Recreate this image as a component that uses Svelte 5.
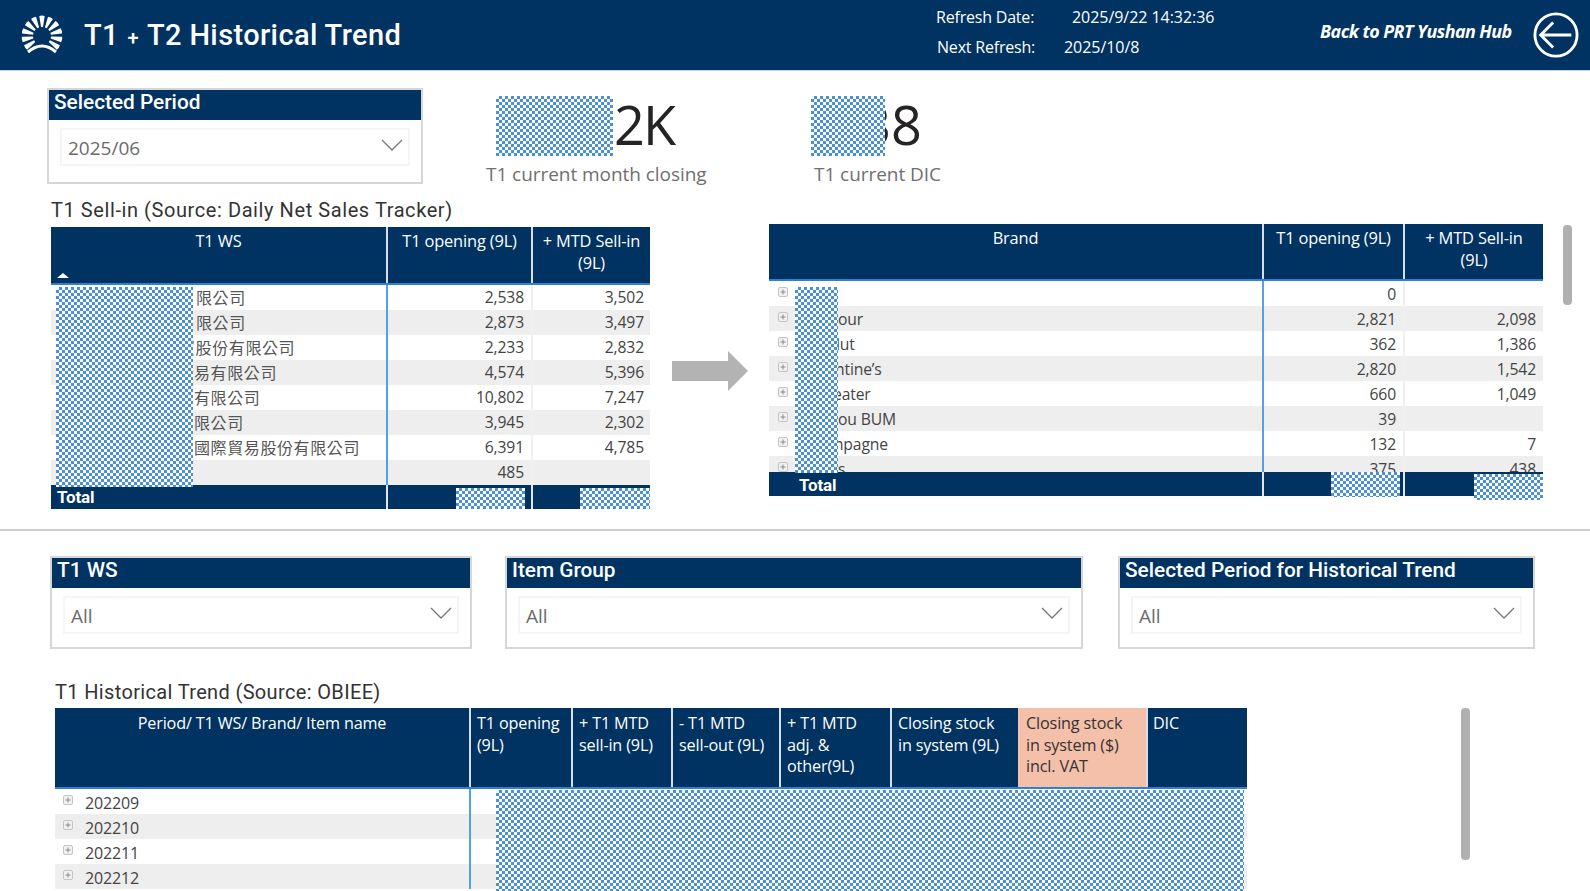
<script>
  const t1 = [
    ['限公司', 145, '2,538', '3,502'],
    ['限公司', 145, '2,873', '3,497'],
    ['貿股份有限公司', 128, '2,233', '2,832'],
    ['易有限公司', 143, '4,574', '5,396'],
    ['有限公司', 143, '10,802', '7,247'],
    ['限公司', 143, '3,945', '2,302'],
    ['國際貿易股份有限公司', 143, '6,391', '4,785'],
    ['', 0, '485', '']
  ];
  const t2 = [
    ['', '0', '', 50],
    ['our', '2,821', '2,098', 50],
    ['lut', '362', '1,386', 48],
    ['ntine’s', '2,820', '1,542', 47],
    ['eater', '660', '1,049', 45],
    ['ou BUM', '39', '', 50],
    ['mpagne', '132', '7', 41],
    ['s', '375', '438', 50]
  ];
  const periods = ['202209', '202210', '202211', '202212'];
  const t3cols = [
    ['T1 opening', '(9L)'],
    ['+ T1 MTD', 'sell-in (9L)'],
    ['- T1 MTD', 'sell-out (9L)'],
    ['+ T1 MTD', 'adj. &', 'other(9L)'],
    ['Closing stock', 'in system (9L)'],
    ['Closing stock', 'in system ($)', 'incl. VAT'],
    ['DIC']
  ];
  const rays = Array.from({ length: 11 }, (_, i) => -125 + i * 25);
</script>

{#snippet chevron()}
  <svg class="chev" viewBox="0 0 22 12"><path d="M1 1 L11 11 L21 1" fill="none" stroke="#777" stroke-width="1.3" /></svg>
{/snippet}

{#snippet plus()}
  <svg class="plus" viewBox="0 0 10 10"><rect x="0.5" y="0.5" width="9" height="9" rx="1.5" fill="#f1f1f1" stroke="#c4c4c4" /><path d="M2.5 5h5M5 2.5v5" stroke="#8a8a8a" stroke-width="1" /></svg>
{/snippet}

{#snippet slicer(title, value, cls)}
  <div class="slicer {cls}">
    <div class="slicer-title">{title}</div>
    <div class="slicer-box"><span>{value}</span>{@render chevron()}</div>
  </div>
{/snippet}

<div class="page">
  <header class="header">
    <svg class="logo" viewBox="-21 -20 42 40">
      {#each rays as a}
        <path d="M-1 -9 L-2.7 -20 Q0 -21 2.7 -20 L1 -9Z" fill="#fff" transform="translate(0 1) rotate({a})" />
      {/each}
      <path d="M-14 17 Q0 5 14 17" fill="none" stroke="#fff" stroke-width="3" />
    </svg>
    <h1 class="title">T1 <span class="small-plus">+</span> T2 Historical Trend</h1>
    <div class="refresh">
      <div class="ref-row"><span class="k1">Refresh Date:</span><span class="v1">2025/9/22 14:32:36</span></div>
      <div class="ref-row"><span class="k2">Next Refresh:</span><span class="v2">2025/10/8</span></div>
    </div>
    <div class="back">Back to PRT Yushan Hub</div>
    <svg class="back-ic" viewBox="0 0 48 48">
      <circle cx="24" cy="24" r="22" fill="none" stroke="#fff" stroke-width="3" />
      <path d="M40 24H8M21 11 8 24 21 37" fill="none" stroke="#fff" stroke-width="3" />
    </svg>
  </header>

  <section class="top">
    <div class="kpi-row">
      {@render slicer('Selected Period', '2025/06', 'sp')}
      <div class="kpi kpi1">
        <div class="kpi-val"><span class="mask m-k1"></span>2K</div>
        <div class="kpi-label">T1 current month closing</div>
      </div>
      <div class="kpi kpi2">
        <div class="kpi-val"><span class="mask m-k2"></span>38</div>
        <div class="kpi-label">T1 current DIC</div>
      </div>
    </div>

    <div class="tables">
      <div class="left">
        <div class="sec-title sell">T1 Sell-in (Source: Daily Net Sales Tracker)</div>
        <div class="tbl t1">
          <div class="thead">
            <div class="th c center">T1 WS<span class="sort"></span></div>
            <div class="th n center">T1 opening (9L)</div>
            <div class="th n center">+ MTD Sell-in (9L)</div>
          </div>
          <div class="tbody">
            {#each t1 as r, i}
              <div class="tr" class:alt={i % 2 === 1}>
                <div class="td c cjk" style="padding-left:{r[1]}px">{r[0]}</div>
                <div class="td n">{r[2]}</div>
                <div class="td n">{r[3]}</div>
              </div>
            {/each}
          </div>
          <div class="tfoot">
            <div class="tf c">Total</div><div class="tf n"></div><div class="tf n"></div>
          </div>
          <span class="mask m-t1a"></span>
          <span class="mask m-t1b"></span>
          <span class="mask m-t1c"></span>
        </div>
      </div>

      <svg class="big-arrow" viewBox="0 0 76 40"><path d="M0 10H56V0L76 20 56 40V30H0Z" fill="#b3b3b3" /></svg>

      <div class="right">
        <div class="tbl t2">
          <div class="thead">
            <div class="th c center">Brand</div>
            <div class="th n center">T1 opening (9L)</div>
            <div class="th n center">+ MTD Sell-in (9L)</div>
          </div>
          <div class="tbody">
            {#each t2 as r, i}
              <div class="tr" class:alt={i % 2 === 1}>
                <div class="td c brand">{@render plus()}<span style="margin-left:{r[3]}px">{r[0]}</span></div>
                <div class="td n">{r[1]}</div>
                <div class="td n">{r[2]}</div>
              </div>
            {/each}
          </div>
          <div class="tfoot">
            <div class="tf c total2">Total</div><div class="tf n"></div><div class="tf n"></div>
          </div>
          <span class="mask m-t2a"></span>
          <span class="mask m-t2b"></span>
          <span class="mask m-t2c"></span>
        </div>
        <div class="scroll s2"></div>
      </div>
    </div>
  </section>

  <div class="divider"></div>

  <section class="slicers">
    {@render slicer('T1 WS', 'All', 's-a')}
    {@render slicer('Item Group', 'All', 's-b')}
    {@render slicer('Selected Period for Historical Trend', 'All', 's-c')}
  </section>

  <section class="hist">
    <div class="sec-title histt">T1 Historical Trend (Source: OBIEE)</div>
    <div class="hist-wrap">
      <div class="tbl t3">
        <div class="thead">
          <div class="th c center">Period/ T1 WS/ Brand/ Item name</div>
          {#each t3cols as col, i}
            <div class="th h" class:peach={i === 5}>
              {#each col as line}<div>{line}</div>{/each}
            </div>
          {/each}
        </div>
        <div class="tbody">
          {#each periods as p, i}
            <div class="tr" class:alt={i % 2 === 1}>
              <div class="td c brand">{@render plus()}<span class="p-text">{p}</span></div>
              <div class="td rest"></div>
            </div>
          {/each}
        </div>
        <span class="mask m-t3"></span>
      </div>
      <div class="scroll s3"></div>
    </div>
  </section>
</div>

<style>
  :global(body) { margin: 0; background: #fff; }
  .page {
    width: 1590px; height: 891px; overflow: hidden; background: #fff;
    font-family: "Open Sans", "Noto Sans", sans-serif; color: #333;
  }
  .mask {
    position: absolute;
    background: conic-gradient(#4a90d9 25%, #fff 0 50%, #4a90d9 0 75%, #fff 0) 0 0 / 6px 6px;
    z-index: 3;
  }

  .header {
    height: 70px; background: #003262; color: #fff;
    display: flex; align-items: center; box-shadow: 0 1px 0 #c5d6e6;
  }
  .logo { width: 42px; height: 40px; margin-left: 21px; flex: none; }
  .title {
    margin: 0 0 0 21px; font: 500 29px "Roboto", sans-serif; letter-spacing: 0.38px;
    white-space: nowrap; width: 852px; flex: none; padding-bottom: 1px;
  }
  .small-plus { font-size: 20px; margin: 0 1px; }
  .refresh { width: 393px; flex: none; font-size: 16px; letter-spacing: -0.2px; padding-bottom: 6px; }
  .ref-row { height: 30px; display: flex; align-items: center; }
  .k1 { width: 136px; }
  .k2 { width: 127px; padding-left: 1px; }
  .v1, .v2 { letter-spacing: -0.05px; }
  .back { font: italic 700 17.9px "Open Sans", sans-serif; letter-spacing: -0.55px; white-space: nowrap; width: 198px; flex: none; padding-bottom: 8px; margin-left: -9px; }
  .back-ic { width: 46px; height: 46px; margin-left: 15px; flex: none; }

  .top { height: 459px; }
  .kpi-row { display: flex; padding: 18px 0 0 47px; height: 116px; }

  .slicer { border: 2px solid #d6d6d6; box-sizing: border-box; background: #fff; flex: none; }
  .slicer-title {
    background: #003262; color: #fff; font: 500 20.8px/25px "Roboto", sans-serif;
    padding-left: 5px; height: 30px; white-space: nowrap;
  }
  .slicer-box {
    margin: 8px 11px 0; height: 38px; border: 2px solid #f5f5f5; box-sizing: border-box;
    display: flex; align-items: center; justify-content: space-between;
    padding: 2px 5px 0 6px; font-size: 19px; color: #6b6b6b;
  }
  .chev { width: 22px; height: 12px; margin-top: -6px; }
  .sp { width: 376px; height: 96px; }

  .kpi { position: relative; flex: none; }
  .kpi1 { margin-left: 63px; width: 222px; }
  .kpi2 { margin-left: 103px; width: 140px; }
  .kpi-val { font: 500 54px/58px "Open Sans", sans-serif; letter-spacing: -2px; color: #252423; text-align: right; height: 60px; margin-top: 7px; }
  .kpi1 .kpi-val { padding-right: 34px; }
  .kpi2 .kpi-val { padding-right: 29px; letter-spacing: 0; }
  .kpi-label { font-size: 19px; line-height: 26px; margin-top: 6px; color: #6f6f6f; white-space: nowrap; letter-spacing: -0.05px; }
  .kpi2 .kpi-label { padding-left: 3px; }
  .m-k1 { left: 10px; top: 1px; width: 117px; height: 60px; }
  .m-k2 { left: 0; top: 1px; width: 74px; height: 60px; }
  .kpi-val .mask { margin-top: 7px; }

  .tables { display: flex; align-items: flex-start; padding-left: 51px; margin-top: -6px; }
  .left { width: 600px; flex: none; }
  .sec-title { font: 400 20px/24px "Roboto", sans-serif; color: #333; white-space: nowrap; }
  .sell { letter-spacing: 0.58px; }
  .histt { letter-spacing: 0.35px; }

  .tbl { position: relative; font-size: 15.7px; letter-spacing: -0.15px; }
  .thead { display: flex; background: #003262; color: #fff; border-bottom: 2px solid #2f80d0; box-sizing: border-box; font-size: 16.4px; }
  .th { box-sizing: border-box; padding: 3px 6px; line-height: 22px; position: relative; border-left: 2px solid #d8dee6; }
  .th:first-child { border-left: 0; }
  .center { text-align: center; }
  .tr { display: flex; height: 25px; align-items: stretch; }
  .alt { background: #eeeeee; }
  .td { box-sizing: border-box; line-height: 25px; white-space: nowrap; color: #444; }
  .td.n { text-align: right; padding-right: 7px; border-left: 2px solid #f0f0f0; }
  .tfoot { display: flex; background: #003262; color: #fff; font-weight: 700; }
  .tf { box-sizing: border-box; line-height: 24px; border-left: 2px solid #e2e6ea; }
  .tf.c { border-left: 0; padding-left: 6px; font: 700 17px/24px "Roboto", sans-serif; }
  .cjk { font: 400 16px/25px "Noto Sans CJK TC", "Open Sans", sans-serif; color: #555; letter-spacing: 0.6px; }

  .t1 { margin-top: 5px; width: 599px; }
  .t1 .c { width: 335px; flex: none; }
  .t1 .n { flex: none; }
  .t1 .thead .n:nth-child(2), .t1 .tr .n:nth-child(2), .t1 .tfoot .n:nth-child(2) { width: 145px; }
  .t1 .thead .n:nth-child(3), .t1 .tr .n:nth-child(3), .t1 .tfoot .n:nth-child(3) { width: 119px; }
  .t1 .tr .td.n:nth-child(3) { padding-right: 6px; }
  .t1 .thead { height: 58px; }
  .t1 .tr .td.n:nth-child(2) { border-left: 2px solid #4aa3f0; }
  .t1 .tfoot { height: 24px; }
  .sort {
    position: absolute; left: 6px; bottom: 5px; width: 0; height: 0;
    border-left: 6px solid transparent; border-right: 6px solid transparent; border-bottom: 5px solid #fff;
  }
  .m-t1a { left: 5px; top: 60px; width: 137px; height: 200px; }
  .m-t1b { left: 405px; top: 261px; width: 69px; height: 21px; }
  .m-t1c { left: 529px; top: 261px; width: 70px; height: 21px; }

  .big-arrow { width: 76px; height: 40px; flex: none; margin: 153px 0 0 21px; }

  .right { display: flex; flex: none; margin-left: 21px; margin-top: 26px; }
  .t2 { width: 774px; height: 272px; }
  .t2 .c { width: 493px; flex: none; }
  .t2 .n { flex: none; }
  .t2 .thead .n:nth-child(2), .t2 .tr .n:nth-child(2), .t2 .tfoot .n:nth-child(2) { width: 141px; }
  .t2 .thead .n:nth-child(3), .t2 .tr .n:nth-child(3), .t2 .tfoot .n:nth-child(3) { width: 140px; }
  .t2 .thead { height: 57px; }
  .t2 .tbody { height: 191px; overflow: hidden; }
  .t2 .td { line-height: 27px; }
  .t2 .tr .td.n:nth-child(2) { border-left: 2px solid #5a9fe0; }
  .t2 .tfoot { height: 24px; }
  .total2 { padding-left: 30px !important; line-height: 26px !important; }
  .brand { display: flex; align-items: flex-start; }
  .plus { width: 10px; height: 10px; margin: 6px 0 0 9px; flex: none; }
  .p-text { margin-left: 11px; color: #444; }
  .m-t2a { left: 26px; top: 63px; width: 43px; height: 186px; }
  .m-t2b { left: 562px; top: 248px; width: 69px; height: 25px; }
  .m-t2c { left: 705px; top: 250px; width: 69px; height: 26px; }

  .scroll { background: #b0b0b0; border-radius: 4px; flex: none; }
  .s2 { width: 9px; height: 80px; margin: 1px 0 0 20px; }

  .divider { height: 2px; background: #cfcfcf; }

  .slicers { display: flex; padding: 25px 0 0 50px; height: 93px; }
  .slicers .slicer { height: 93px; }
  .s-a { width: 422px; }
  .s-b { width: 578px; margin-left: 33px; }
  .s-c { width: 417px; margin-left: 35px; }

  .hist { padding: 31px 0 0 55px; }
  .hist-wrap { display: flex; margin-top: 4px; }
  .t3 { width: 1192px; flex: none; }
  .t3 .thead { height: 81px; font-size: 16.2px; }
  .t3 .th { line-height: 21.6px; padding-top: 5px; }
  .t3 .c { width: 414px; flex: none; }
  .t3 .h { padding-left: 6px; padding-right: 4px; white-space: nowrap; flex: none; }
  .t3 .h:nth-child(2) { width: 102px; }
  .t3 .h:nth-child(3) { width: 100px; }
  .t3 .h:nth-child(4) { width: 108px; }
  .t3 .h:nth-child(5) { width: 111px; }
  .t3 .h:nth-child(6) { width: 128px; }
  .t3 .h:nth-child(7) { width: 128px; }
  .t3 .h:nth-child(8) { width: 99px; padding-left: 5px; }
  .peach { background: #f4c0aa; color: #333; border-left-color: #f4c0aa; }
  .rest { flex: 1; border-left: 2px solid #4aa3f0; }
  .t3 .td.c { padding: 0; }
  .t3 .plus { margin-left: 8px; margin-top: 6px; }
  .t3 .p-text { margin-left: 12px; line-height: 28px; font-size: 16px; }
  .m-t3 { left: 441px; top: 82px; width: 748px; height: 102px; }
  .s3 { width: 9px; height: 152px; margin-left: 214px; }
</style>
